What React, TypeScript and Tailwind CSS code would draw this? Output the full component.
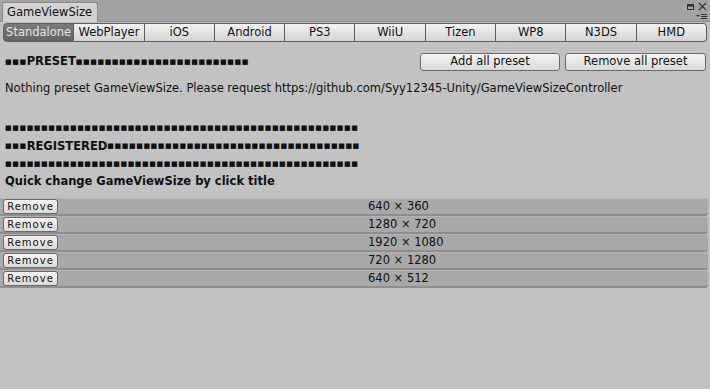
import React from "react";

const platforms = ["Standalone", "WebPlayer", "iOS", "Android", "PS3", "WiiU", "Tizen", "WP8", "N3DS", "HMD"];
const sizes = ["640 × 360", "1280 × 720", "1920 × 1080", "720 × 1280", "640 × 512"];

// row of small black squares used as a separator
function Sq({ n }: { n: number }) {
  return <span className="inline-block text-[7px] leading-none tracking-[0.6px]">{"■".repeat(n)}</span>;
}

function Button({ label, className = "" }: { label: string; className?: string }) {
  return (
    <div
      className={
        "flex items-center justify-center rounded-[3px] border border-[#6a6a6a] bg-gradient-to-b from-[#f4f4f4] to-[#dadada] text-[#111] " +
        className
      }
    >
      {label}
    </div>
  );
}

export default function App() {
  return (
    <main
      className="flex h-[389px] w-[710px] flex-col overflow-hidden bg-[#c2c2c2] text-[11.5px] text-[#101010]"
      style={{ fontFamily: '"DejaVu Sans", Verdana, sans-serif' }}
    >
      <header className="relative h-[22px] shrink-0 border-b border-[#8e8e8e] bg-[#a3a3a3]">
        <div className="absolute bottom-[-1px] left-[2px] flex h-[20px] w-[96px] items-center rounded-t-[3px] border border-b-0 border-[#8a8a8a] bg-[#d2d2d2] pl-[4px] text-[#111]">
          GameViewSize
        </div>
        <svg className="absolute right-0 top-0" width="26" height="22" viewBox="0 0 26 22">
          <rect x="3.5" y="4.5" width="6" height="5" fill="none" stroke="#333" />
          <line x1="4" y1="5.5" x2="9" y2="5.5" stroke="#333" strokeWidth="2" />
          <path d="M15 3 L22 10 M22 3 L15 10" stroke="#333" strokeWidth="1.1" />
          <path d="M12 15 L16 15 L14 17 Z" fill="#333" />
          <path d="M17 14.5 H23 M17 16.5 H23 M17 18.5 H23" stroke="#333" strokeWidth="1" />
        </svg>
      </header>

      <div className="flex h-[20px] shrink-0 px-[3px] pt-[1px]">
        {platforms.map((p, i) => (
          <div
            key={p}
            className={
              "flex flex-1 items-center justify-center overflow-hidden whitespace-nowrap border-y border-r border-[#5e5e5e] " +
              (i === 0
                ? "rounded-l-[4px] border-l bg-gradient-to-b from-[#7a7a7a] to-[#646464] text-[#e6e6e6]"
                : "bg-gradient-to-b from-[#f2f2f2] to-[#d4d4d4] text-[#111]") +
              (i === platforms.length - 1 ? " rounded-r-[4px]" : "")
            }
          >
            {p}
          </div>
        ))}
      </div>

      <section className="mt-[11px] flex h-[18px] items-center pl-[5px] pr-[4px]">
        <div className="flex items-center font-bold">
          <Sq n={3} />
          <span>PRESET</span>
          <Sq n={24} />
        </div>
        <div className="ml-auto flex gap-[5px]">
          <Button label="Add all preset" className="h-[18px] w-[140px]" />
          <Button label="Remove all preset" className="h-[18px] w-[141px]" />
        </div>
      </section>

      <p className="mt-[8px] h-[18px] pl-[5px] leading-[18px]">
        Nothing preset GameViewSize. Please request https://github.com/Syy12345-Unity/GameViewSizeController
      </p>

      <div className="mt-[23px] flex flex-col pl-[5px] font-bold">
        <div className="flex h-[17.7px] items-center">
          <Sq n={49} />
        </div>
        <div className="flex h-[17.7px] items-center">
          <Sq n={3} />
          <span>REGISTERED</span>
          <Sq n={35} />
        </div>
        <div className="flex h-[17.7px] items-center">
          <Sq n={49} />
        </div>
        <div className="flex h-[17.7px] items-center">Quick change GameViewSize by click title</div>
      </div>

      <div className="mt-[7px] flex flex-col pr-[2px]">
        {sizes.map((s) => (
          <div
            key={s}
            className="flex h-[18px] items-center rounded-r-[3px] border-b-2 border-t border-b-[#8e8e8e] border-t-[#b4b4b4] bg-[#a9a9a9]"
          >
            <Button label="Remove" className="ml-[3px] h-[15px] w-[55px] text-[10px] tracking-[1px]" />
            <span className="ml-[310px]">{s}</span>
          </div>
        ))}
      </div>
    </main>
  );
}
